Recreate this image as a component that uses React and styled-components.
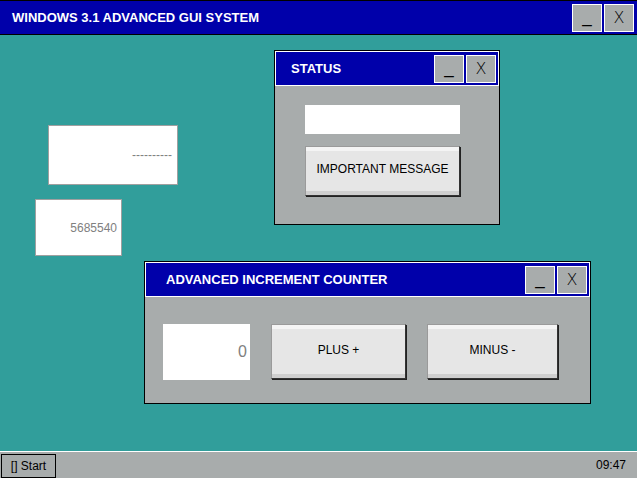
import React, { useState } from 'react';
import styled, { createGlobalStyle } from 'styled-components';

const Global = createGlobalStyle`
  html, body {
    margin: 0;
    padding: 0;
    width: 637px;
    height: 478px;
    overflow: hidden;
    font-family: "Liberation Sans", Arial, sans-serif;
  }
`;

const Screen = styled.div`
  width: 637px;
  height: 478px;
  display: flex;
  flex-direction: column;
  background: #319e9b;
`;

const MainBar = styled.div`
  height: 35px;
  box-sizing: border-box;
  border-top: 1px solid #000;
  border-bottom: 1px solid #000;
  background: #0000aa;
  display: flex;
  align-items: center;
  justify-content: space-between;
  padding: 0 3px 0 12px;
`;

const BarTitle = styled.span`
  color: #fff;
  font-weight: bold;
  font-size: 13px;
`;

const Controls = styled.div`
  display: flex;
  gap: 2px;
`;

const CtrlButton = styled.button`
  width: 30px;
  height: 28px;
  background: #a8acac;
  border: 1px solid #fff;
  padding: 0;
  margin: 0;
  display: flex;
  align-items: center;
  justify-content: center;
  font-family: ${p => (p.thin ? '"DejaVu Sans", sans-serif' : '"Liberation Sans", Arial, sans-serif')};
  font-weight: ${p => (p.thin ? 200 : 400)};
  font-size: ${p => (p.thin ? 16 : 17)}px;
  color: #000;
  line-height: 1;
`;

const Desktop = styled.div`
  flex: 1;
  position: relative;
`;

const Window = styled.div`
  position: absolute;
  left: ${p => p.x}px;
  top: ${p => p.y}px;
  width: ${p => p.w}px;
  height: ${p => p.h}px;
  box-sizing: border-box;
  border: 1px solid #000;
  background: #a8acac;
  display: flex;
  flex-direction: column;
`;

const TitleBar = styled.div`
  height: 35px;
  box-sizing: border-box;
  border: 1px solid #fff;
  background: #0000aa;
  display: flex;
  align-items: center;
  justify-content: space-between;
  padding: 0 2px 0 ${p => p.pl || 15}px;
`;

const StatusBody = styled.div`
  display: flex;
  flex-direction: column;
  align-items: flex-start;
  padding: 19px 0 0 30px;
  gap: 12px;
`;

const Field = styled.div`
  width: ${p => p.w}px;
  height: ${p => p.h}px;
  background: #fff;
  box-sizing: border-box;
  border: ${p => (p.bordered ? '1px solid #a0a0a0' : 'none')};
  display: flex;
  align-items: center;
  justify-content: flex-end;
  padding-right: ${p => p.pr || 4}px;
  color: #808080;
  font-size: ${p => p.fs || 12}px;
`;

const FreeField = styled(Field)`
  position: absolute;
  left: ${p => p.x}px;
  top: ${p => p.y}px;
`;

const PushButton = styled.button`
  width: ${p => p.w}px;
  height: ${p => p.h}px;
  box-sizing: border-box;
  background: #e6e6e6;
  border: 1px solid #9a9a9a;
  border-right-color: #333;
  border-bottom-color: #333;
  box-shadow: inset 0 4px 0 #f4f4f4, inset 0 -4px 0 #cfcfcf, 1px 1px 0 #222;
  font-family: "Liberation Sans", Arial, sans-serif;
  font-size: 12px;
  color: #000;
  padding: 0 0 4px;
`;

const CounterBody = styled.div`
  display: flex;
  align-items: flex-start;
  padding: 27px 0 0 18px;
  gap: 21px;
`;

const Taskbar = styled.div`
  height: 27px;
  box-sizing: border-box;
  border-top: 1px solid #fff;
  background: #a8acac;
  display: flex;
  align-items: center;
  justify-content: space-between;
  padding: 0 11px 0 1px;
`;

const StartButton = styled.button`
  width: 55px;
  height: 24px;
  margin-top: 1px;
  box-sizing: border-box;
  background: #a8acac;
  border: 1px solid #000;
  font-family: "Liberation Sans", Arial, sans-serif;
  font-size: 12px;
  color: #000;
  padding: 0;
`;

const Clock = styled.span`
  font-size: 12px;
  color: #000;
`;

function WinControls() {
  return (
    <Controls>
      <CtrlButton>_</CtrlButton>
      <CtrlButton thin>X</CtrlButton>
    </Controls>
  );
}

export default function App() {
  const [count, setCount] = useState(0);
  return (
    <Screen>
      <Global />
      <MainBar>
        <BarTitle>WINDOWS 3.1 ADVANCED GUI SYSTEM</BarTitle>
        <WinControls />
      </MainBar>
      <Desktop>
        <FreeField x={48} y={90} w={130} h={60} bordered pr={5}>----------</FreeField>
        <FreeField x={35} y={164} w={87} h={57} bordered pr={4}>5685540</FreeField>

        <Window x={274} y={15} w={226} h={175}>
          <TitleBar pl={15}>
            <BarTitle>STATUS</BarTitle>
            <WinControls />
          </TitleBar>
          <StatusBody>
            <Field w={155} h={29} />
            <PushButton w={155} h={50}>IMPORTANT MESSAGE</PushButton>
          </StatusBody>
        </Window>

        <Window x={144} y={226} w={447} h={143}>
          <TitleBar pl={20}>
            <BarTitle>ADVANCED INCREMENT COUNTER</BarTitle>
            <WinControls />
          </TitleBar>
          <CounterBody>
            <Field w={87} h={56} fs={16} pr={3}>{count}</Field>
            <PushButton w={135} h={55} onClick={() => setCount(count + 1)}>PLUS +</PushButton>
            <PushButton w={131} h={55} onClick={() => setCount(count - 1)}>MINUS -</PushButton>
          </CounterBody>
        </Window>
      </Desktop>
      <Taskbar>
        <StartButton>[] Start</StartButton>
        <Clock>09:47</Clock>
      </Taskbar>
    </Screen>
  );
}
